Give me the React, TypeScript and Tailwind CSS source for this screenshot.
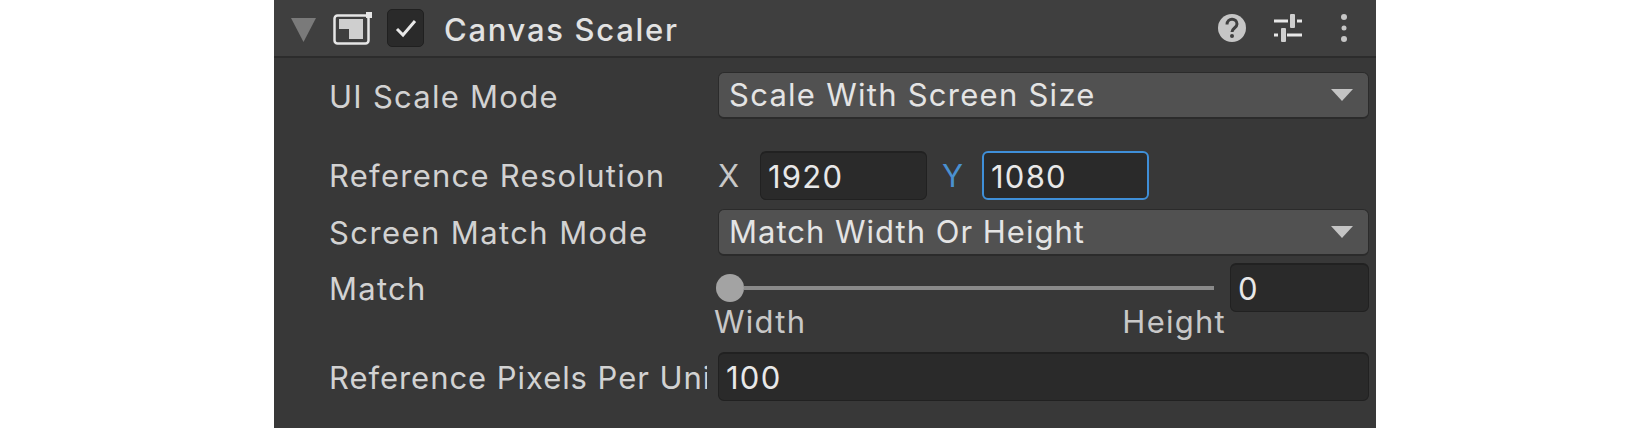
import React from "react";

const Caret = () => (
  <svg width="22" height="14" viewBox="0 0 22 14" className="shrink-0">
    <path d="M0 1h22L11 13z" fill="#c4c4c4" />
  </svg>
);

const Dropdown = ({ value, className = "" }: { value: string; className?: string }) => (
  <div className={"flex-1 h-[47px] pl-[10px] pr-[15px] flex items-center justify-between bg-[#515151] rounded-[6px] border border-[#2b2b2b] border-b-2 text-[#e4e4e4] " + className}>
    <span>{value}</span>
    <Caret />
  </div>
);

const Field = ({ value, className }: { value: string; className: string }) => (
  <div
    className={
      "h-[49px] pl-[7px] pt-[2px] flex items-center bg-[#2a2a2a] rounded-[6px] border border-[#212121] border-t-2 text-[#e8e8e8] " +
      className
    }
  >
    {value}
  </div>
);

const Label = ({ text, className = "" }: { text: string; className?: string }) => (
  <div className={"w-[378px] mr-[11px] shrink-0 overflow-hidden whitespace-nowrap text-[#d2d2d2] " + className}>
    {text}
  </div>
);

export default function App() {
  return (
    <div className="w-[1650px] h-[428px] bg-white overflow-hidden font-['Inter',sans-serif] text-[31px] leading-[36px] tracking-[1.26px]">
      <div className="ml-[274px] w-[1102px] h-[428px] bg-[#383838] flex flex-col">
        {/* header */}
        <div className="h-[58px] shrink-0 bg-[#3f3f3f] border-b-2 border-[#2c2c2c] flex items-center pl-[17px] pr-[29px]">
          <svg width="25" height="24" viewBox="0 0 25 24" className="shrink-0 mt-[4px]">
            <path d="M0 0h25L12.500 24z" fill="#7a7a7a" />
          </svg>
          <svg width="40" height="33" viewBox="0 0 40 33" className="shrink-0 ml-[17px]">
            <rect x="1.500" y="3.500" width="34" height="28" rx="3" fill="none" stroke="#e6e6e6" strokeWidth="2.500" />
            <path d="M6 7h24v20H16V17H6z" fill="#cfcfcf" />
            <path d="M33 0h6v6h-6z" fill="#e6e6e6" />
          </svg>
          <div className="w-[37px] h-[38px] ml-[14px] shrink-0 bg-[#2a2a2a] border border-[#202020] rounded-[5px] flex items-center justify-center">
            <svg width="24" height="20" viewBox="0 0 24 20">
              <path d="M3 11l6 6L21 3" fill="none" stroke="#e8e8e8" strokeWidth="3" />
            </svg>
          </div>
          <span className="ml-[20px] mt-[3px] font-medium tracking-[1.7px] text-[#e2e2e2]">Canvas Scaler</span>
          <svg width="28" height="28" viewBox="0 0 28 28" className="ml-auto shrink-0">
            <circle cx="14" cy="14" r="14" fill="#c6c6c6" />
            <path d="M9 10.500c0-7 10-7 10-.5 0 4-5 4-5 8" fill="none" stroke="#3f3f3f" strokeWidth="3" />
            <circle cx="14" cy="22" r="2" fill="#3f3f3f" />
          </svg>
          <svg width="28" height="28" viewBox="0 0 28 28" className="ml-[28px] shrink-0">
            <path d="M0 7h14M23 7h5M0 21h4M13 21h15" stroke="#e8e8e8" strokeWidth="3" />
            <rect x="16" y="0" width="5" height="14" rx="1" fill="#cfcfcf" />
            <rect x="7" y="14" width="5" height="14" rx="1" fill="#cfcfcf" />
          </svg>
          <svg width="6" height="28" viewBox="0 0 6 28" className="ml-[39px] shrink-0">
            <circle cx="3" cy="3" r="3" fill="#c6c6c6" />
            <circle cx="3" cy="14" r="2.500" fill="#c6c6c6" />
            <circle cx="3" cy="25" r="3" fill="#c6c6c6" />
          </svg>
        </div>

        <div className="pl-[55px] pr-[7px] flex flex-col">
          <div className="flex items-center mt-[14px]">
            <Label text="UI Scale Mode" className="pt-[3px]" />
            <Dropdown value="Scale With Screen Size" />
          </div>

          <div className="flex items-center mt-[32px]">
            <Label text="Reference Resolution" />
            <span className="w-[42px] text-[#c8c8c8]">X</span>
            <Field value="1920" className="w-[167px]" />
            <span className="w-[55px] pl-[15px] text-[#4a90d0]">Y</span>
            <Field value="1080" className="w-[167px] !border-2 !border-[#3f8fd8]" />
          </div>

          <div className="flex items-center mt-[9px]">
            <Label text="Screen Match Mode" className="tracking-[1.4px]" />
            <Dropdown value="Match Width Or Height" className="tracking-[1px]" />
          </div>

          <div className="flex mt-[7px]">
            <Label text="Match" className="pt-[8px]" />
            <div className="flex-1 flex flex-col">
              <div className="flex items-center">
                <div className="flex-1 flex items-center">
                  <div className="w-[28px] h-[28px] ml-[-2px] rounded-full bg-[#a3a3a3] shrink-0" />
                  <div className="w-[470px] h-[4px] bg-[#8a8a8a]" />
                </div>
                <Field value="0" className="w-[139px]" />
              </div>
              <div className="flex justify-between w-[512px] ml-[-4px] mt-[-8px] text-[#c8c8c8]">
                <span>Width</span>
                <span>Height</span>
              </div>
            </div>
          </div>

          <div className="flex items-center mt-[12px]">
            <Label text="Reference Pixels Per Unit" className="pt-[3px] tracking-[0.95px]" />
            <Field value="100" className="flex-1" />
          </div>
        </div>
      </div>
    </div>
  );
}
